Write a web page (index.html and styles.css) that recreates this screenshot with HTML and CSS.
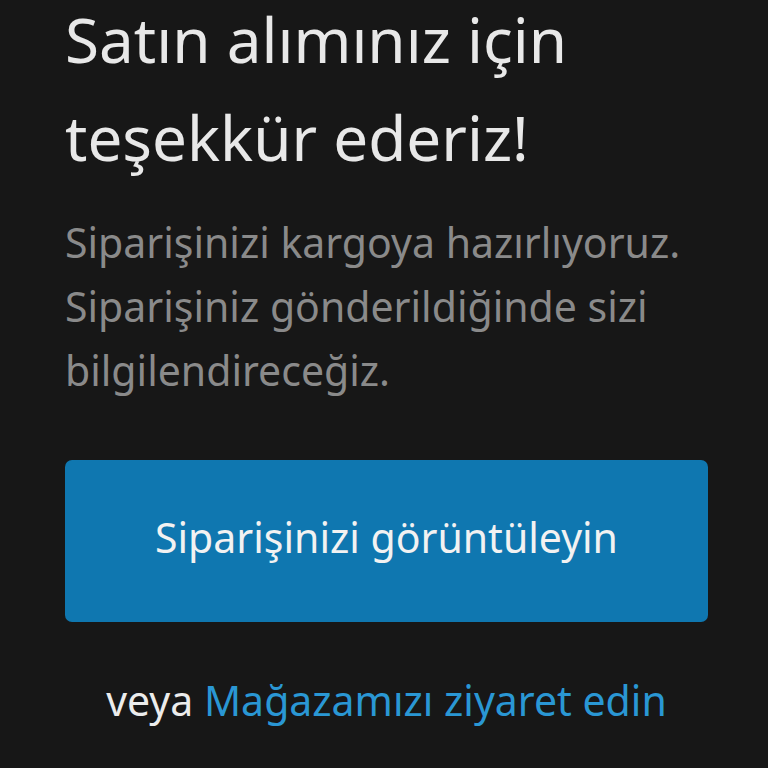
FILE: index.html
```html
<html lang="tr">
    <head>
        <title>Teşekkürler</title>
        <link rel="stylesheet" href="styles.css">
    </head>
    <body>
        <div class="thanks">
            <h1 class="thanks-title">Satın alımınız için teşekkür ederiz!</h1>
            <p class="thanks-text">Siparişinizi kargoya hazırlıyoruz. Siparişiniz gönderildiğinde sizi bilgilendireceğiz.</p>
            <a class="order-button" href="#">Siparişinizi görüntüleyin</a>
            <p class="alt-link">veya <a href="#">Mağazamızı ziyaret edin</a></p>
        </div>
    </body>
</html>
```

FILE: styles.css
```css
body {
    background-color: #171717;
    margin: 0;
    padding: 0;
    width: 768px;
    height: 768px;
    overflow: hidden;
    font-family: "Noto Sans", sans-serif;
}

.thanks {
    display: flex;
    flex-direction: column;
    padding: 0 60px 0 65px;
}

.thanks-title {
    margin: -10px 0 0;
    font-size: 62px;
    font-weight: normal;
    line-height: 98px;
    color: #e8e8e8;
}

.thanks-text {
    margin: 24px 0 0;
    font-size: 41px;
    line-height: 64px;
    color: #8a8a8a;
}

.order-button {
    display: flex;
    align-items: center;
    justify-content: center;
    margin-top: 58px;
    height: 162px;
    padding-bottom: 8px;
    box-sizing: border-box;
    border-radius: 7px;
    background-color: #0f77b0;
    color: #f2f2f2;
    font-size: 41px;
    text-decoration: none;
}

.alt-link {
    margin: 50px 0 0;
    text-align: center;
    font-size: 41px;
    color: #ececec;
}

.alt-link a {
    color: #2a97d4;
    text-decoration: none;
}
```
